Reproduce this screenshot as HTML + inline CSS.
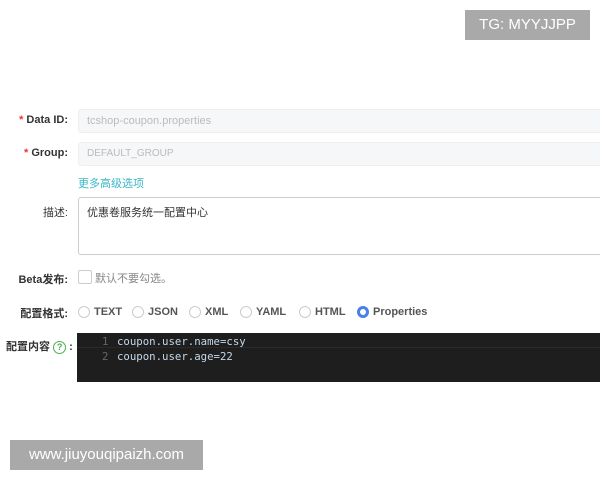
<!DOCTYPE html>
<html><head><meta charset="utf-8"><style>
body{margin:0;width:600px;height:480px;background:#fff;position:relative;overflow:hidden;font-family:"Liberation Sans","Noto Sans CJK SC",sans-serif;font-size:11px;color:#333}
.a{position:absolute}
.lbl{position:absolute;right:532px;font-weight:bold;color:#333;white-space:nowrap}
.req{color:#e33}
.inp{position:absolute;left:78px;width:530px;background:#f6f7f8;border:1px solid #eee;border-radius:3px;color:#bbb;box-sizing:border-box;padding-left:8px}
.r{display:inline-block;width:12px;height:12px;border:1px solid #ccc;border-radius:50%;vertical-align:middle;margin-right:4px;box-sizing:border-box}
.ro{position:absolute;top:306px;font-weight:bold;color:#555;white-space:nowrap}
</style></head><body>
<div class="a" style="left:465px;top:10px;width:125px;height:30px;background:#a9a9a9;color:#fff;font-size:15px;line-height:30px;text-align:center">TG: MYYJJPP</div>
<div class="lbl" style="top:114px"><span class="req">*</span> Data ID:</div>
<div class="inp" style="top:109px;height:24px;line-height:22px">tcshop-coupon.properties</div>
<div class="lbl" style="top:147px"><span class="req">*</span> Group:</div>
<div class="inp" style="top:142px;height:24px;line-height:22px;font-size:10px">DEFAULT_GROUP</div>
<div class="a" style="left:78px;top:175px;color:#3cb7c8">更多高级选项</div>
<div class="lbl" style="top:204px;font-weight:normal">描述:</div>
<div class="a" style="left:78px;top:197px;width:530px;height:58px;border:1px solid #ccc;border-radius:3px;box-sizing:border-box;padding:6px 8px;color:#333">优惠卷服务统一配置中心</div>
<div class="lbl" style="top:271px">Beta发布:</div>
<div class="a" style="left:78px;top:270px;width:12px;height:12px;border:1px solid #ccc;border-radius:2px"></div>
<div class="a" style="left:95px;top:270px;color:#888">默认不要勾选。</div>
<div class="lbl" style="top:305px;font-weight:bold">配置格式:</div>
<div class="ro" style="left:78px"><span class="r"></span>TEXT</div>
<div class="ro" style="left:132px"><span class="r"></span>JSON</div>
<div class="ro" style="left:189px"><span class="r"></span>XML</div>
<div class="ro" style="left:240px"><span class="r"></span>YAML</div>
<div class="ro" style="left:299px"><span class="r"></span>HTML</div>
<div class="ro" style="left:357px"><span class="r" style="border:3.5px solid #4a7ee8;background:#fff"></span>Properties</div>
<div class="a" style="left:6px;top:338px;font-weight:bold;white-space:nowrap">配置内容 <span style="display:inline-block;width:11px;height:11px;border:1.5px solid #4caf50;border-radius:50%;color:#4caf50;font-size:9px;line-height:11px;text-align:center;vertical-align:middle">?</span> :</div>
<div class="a" style="left:77px;top:333px;width:530px;height:49px;background:#1e1e1e"></div>
<div class="a" style="left:77px;top:347px;width:530px;height:1px;background:#2a2a2a"></div>
<div class="a" style="left:102px;top:334px;font-family:'DejaVu Sans Mono',monospace;font-size:10.7px;line-height:15px;color:#666">1<br>2</div>
<div class="a" style="left:117px;top:334px;font-family:'DejaVu Sans Mono',monospace;font-size:10.7px;line-height:15px;color:#c4d8ea">coupon.user.name=csy<br>coupon.user.age=22</div>
<div class="a" style="left:10px;top:440px;width:193px;height:30px;background:#a9a9a9;color:#fff;font-size:15px;line-height:30px;text-align:center">www.jiuyouqipaizh.com</div>
</body></html>
